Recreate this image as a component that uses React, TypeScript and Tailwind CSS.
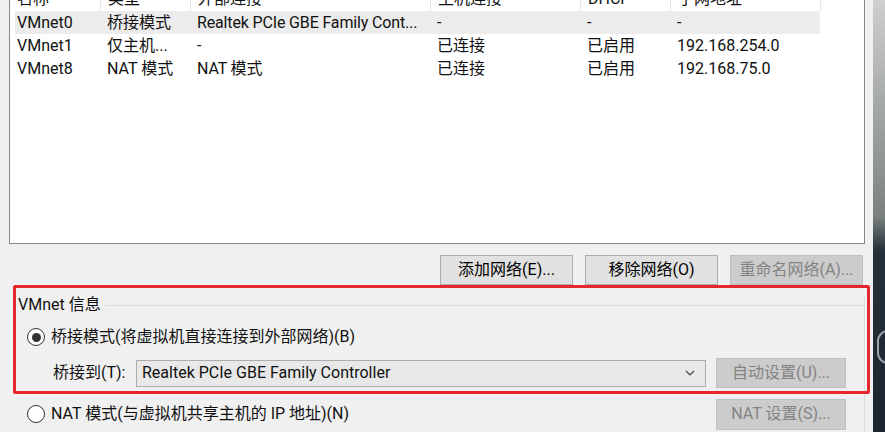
import React from 'react';

const font = { fontFamily: 'Roboto, "Noto Sans CJK SC", sans-serif' };

const columns = [
  { title: '名称', w: 'w-[90px]' },
  { title: '类型', w: 'w-[90px]' },
  { title: '外部连接', w: 'w-[240px]' },
  { title: '主机连接', w: 'w-[150px]' },
  { title: 'DHCP', w: 'w-[90px]' },
  { title: '子网地址', w: 'w-[150px]' },
];

const rows = [
  ['VMnet0', '桥接模式', 'Realtek PCIe GBE Family Cont...', '-', '-', '-'],
  ['VMnet1', '仅主机...', '-', '已连接', '已启用', '192.168.254.0'],
  ['VMnet8', 'NAT 模式', 'NAT 模式', '已连接', '已启用', '192.168.75.0'],
];

const Radio: React.FC<{ checked?: boolean }> = ({ checked }) => (
  <span className="w-[18px] h-[18px] rounded-full border border-[#333333] bg-white flex items-center justify-center shrink-0">
    {checked && <span className="w-[9px] h-[9px] rounded-full bg-[#333333]" />}
  </span>
);

const Button: React.FC<{ label: string; disabled?: boolean; className?: string }> = ({ label, disabled, className }) => (
  <div
    className={`flex items-center justify-center border ${
      disabled ? 'bg-[#cccccc] border-[#bfbfbf] text-[#838383]' : 'bg-[#e1e1e1] border-[#adadad] text-black'
    } ${className ?? ''}`}
  >
    {label}
  </div>
);

export default function App() {
  return (
    <div className="w-[885px] h-[432px] flex overflow-hidden text-[16px] text-[#111111]" style={font}>
      <div className="relative w-[873px] h-[432px] bg-[#f0f0f0] flex flex-col shrink-0">
        {/* Network list */}
        <div className="ml-[9px] mt-[-15px] w-[856px] h-[259px] border border-[#828790] bg-white shrink-0">
          <div className="flex h-[25px] items-center">
            {columns.map((c, i) => (
              <div
                key={c.title}
                className={`${c.w} ${i === 0 ? 'w-[91px] pl-[7px]' : 'pl-[7px]'} h-full flex items-center border-r border-[#e5e5e5] leading-none`}
              >
                {c.title}
              </div>
            ))}
          </div>
          {rows.map((r, ri) => (
            <div key={r[0]} className={`flex h-[23px] items-center ml-[5px] w-[805px] ${ri === 0 ? 'bg-[#ececec]' : ''}`}>
              {r.map((cell, ci) => (
                <div
                  key={ci}
                  className={`${ci === 0 ? 'w-[85px] pl-[2px]' : `${columns[ci].w} pl-[7px]`} whitespace-nowrap ${
                    ci === 2 ? 'tracking-[-0.15px]' : ''
                  }`}
                >
                  {cell}
                </div>
              ))}
            </div>
          ))}
        </div>

        {/* Buttons */}
        <div className="flex justify-end gap-[12px] pr-[10px] mt-[11px] shrink-0">
          <Button label="添加网络(E)..." className="w-[133px] h-[30px]" />
          <Button label="移除网络(O)" className="w-[133px] h-[30px]" />
          <Button label="重命名网络(A)..." disabled className="w-[133px] h-[30px]" />
        </div>

        {/* VMnet info group */}
        <div className="ml-[13px] mt-[12px] w-[852px] flex-1 border-r border-[#dcdcdc] flex flex-col">
          <div className="flex items-center h-[16px]">
            <span className="pl-[5px] pr-[4px] leading-none whitespace-nowrap">VMnet 信息</span>
            <span className="flex-1 h-px bg-[#dcdcdc]" />
          </div>
          <div className="flex items-center h-[24px] mt-[12px] pl-[14px] gap-[6px]">
            <Radio checked />
            <span>桥接模式(将虚拟机直接连接到外部网络)(B)</span>
          </div>
          <div className="flex items-center h-[30px] mt-[9px] pl-[40px]">
            <span className="w-[83px] whitespace-nowrap">桥接到(T):</span>
            <div className="w-[570px] h-[27px] bg-[#e8e8e8] border border-[#adadad] flex items-center pl-[5px] pr-[10px]">
              <span className="flex-1">Realtek PCIe GBE Family Controller</span>
              <svg width="10" height="6" viewBox="0 0 10 6" fill="none" stroke="#444" strokeWidth="1.2">
                <path d="M1 1l4 4 4-4" />
              </svg>
            </div>
            <Button label="自动设置(U)..." disabled className="ml-[10px] w-[130px] h-[30px]" />
          </div>
          <div className="flex items-center h-[32px] mt-[10px] pl-[14px] gap-[6px]">
            <Radio />
            <span>NAT 模式(与虚拟机共享主机的 IP 地址)(N)</span>
            <Button label="NAT 设置(S)..." disabled className="ml-auto mr-[18px] w-[130px] h-[31px]" />
          </div>
        </div>

        {/* Red annotation box */}
        <div className="absolute left-[13px] top-[285px] w-[857px] h-[109px] border-[3px] border-[#e8262d] rounded-[2px] pointer-events-none" />
      </div>

      {/* Desktop strip */}
      <div className="flex-1 h-full bg-[linear-gradient(180deg,#cfd0cd_0%,#a4a8a5_25%,#7b827e_50%,#24303a_58%,#1b2530_100%)] flex flex-col items-end pt-[330px]">
        <span className="w-[22px] h-[34px] rounded-full border-2 border-[#9aa4ac] mr-[-14px]" />
      </div>
    </div>
  );
}
